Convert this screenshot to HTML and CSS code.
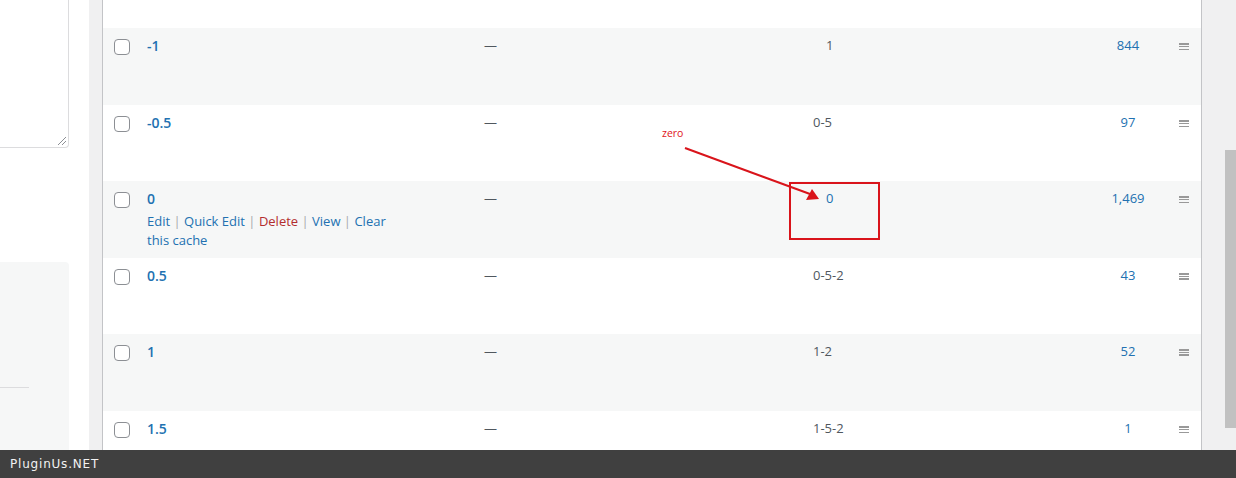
FILE: index.html
```html
<!DOCTYPE html>
<html lang="en">
<head>
  <meta charset="UTF-8">
  <title>Terms</title>
  <link rel="stylesheet" href="styles.css">
</head>
<body>

<div class="screen">
  <aside class="side">
    <div class="side-field"><span class="grip"></span></div>
    <div class="side-box"><div class="side-rule"></div></div>
  </aside>

  <main class="list">
    <table class="terms">
      <colgroup>
        <col class="col-cb">
        <col class="col-name">
        <col class="col-desc">
        <col class="col-slug">
        <col class="col-count">
        <col class="col-handle">
      </colgroup>
      <tbody>
        <tr class="cut"><td colspan="6"></td></tr>
        <tr class="alt">
          <td class="cb"><span class="check"></span></td>
          <td><a class="title" href="#">-1</a></td>
          <td class="muted">—</td>
          <td class="muted inset">1</td>
          <td class="count"><a href="#">844</a></td>
          <td class="handle"><span class="bars"></span></td>
        </tr>
        <tr>
          <td class="cb"><span class="check"></span></td>
          <td><a class="title" href="#">-0.5</a></td>
          <td class="muted">—</td>
          <td class="muted">0-5</td>
          <td class="count"><a href="#">97</a></td>
          <td class="handle"><span class="bars"></span></td>
        </tr>
        <tr class="alt">
          <td class="cb"><span class="check"></span></td>
          <td>
            <a class="title" href="#">0</a>
            <div class="row-actions">
              <a href="#">Edit</a> <span class="sep">|</span> <a href="#">Quick&nbsp;Edit</a> <span class="sep">|</span> <a class="del" href="#">Delete</a> <span class="sep">|</span> <a href="#">View</a> <span class="sep">|</span> <a href="#">Clear this cache</a>
            </div>
          </td>
          <td class="muted">—</td>
          <td class="muted inset blue">0</td>
          <td class="count"><a href="#">1,469</a></td>
          <td class="handle"><span class="bars"></span></td>
        </tr>
        <tr>
          <td class="cb"><span class="check"></span></td>
          <td><a class="title" href="#">0.5</a></td>
          <td class="muted">—</td>
          <td class="muted">0-5-2</td>
          <td class="count"><a href="#">43</a></td>
          <td class="handle"><span class="bars"></span></td>
        </tr>
        <tr class="alt">
          <td class="cb"><span class="check"></span></td>
          <td><a class="title" href="#">1</a></td>
          <td class="muted">—</td>
          <td class="muted">1-2</td>
          <td class="count"><a href="#">52</a></td>
          <td class="handle"><span class="bars"></span></td>
        </tr>
        <tr>
          <td class="cb"><span class="check"></span></td>
          <td><a class="title" href="#">1.5</a></td>
          <td class="muted">—</td>
          <td class="muted">1-5-2</td>
          <td class="count"><a href="#">1</a></td>
          <td class="handle"><span class="bars"></span></td>
        </tr>
      </tbody>
    </table>
  </main>

  <div class="track"><div class="thumb"></div></div>
</div>

<!-- annotation drawn on top of the screenshot -->
<svg class="note" width="1236" height="478" viewBox="0 0 1236 478">
  <text x="662" y="137" class="note-text">zero</text>
  <line x1="685" y1="148" x2="810" y2="194" stroke="#d9141b" stroke-width="2"/>
  <polygon points="819,199 812,189 806,200" fill="#d9141b"/>
  <rect x="790" y="183" width="89" height="56" fill="none" stroke="#d9141b" stroke-width="2"/>
</svg>

<footer class="brand">PluginUs.NET</footer>

</body>
</html>
```

FILE: styles.css
```css
body {
  margin: 0;
  background: #f0f0f1;
  font-family: "Open Sans", "Noto Sans", sans-serif;
  font-size: 13px;
  color: #3c434a;
  overflow: hidden;
}

a {
  color: #2271b1;
  text-decoration: none;
}

.screen {
  display: flex;
  height: 478px;
}

/* left column (form side) */
.side {
  width: 89px;
  background: #fff;
  display: flex;
  flex-direction: column;
}

.side-field {
  width: 68px;
  height: 147px;
  border-right: 1px solid #dcdcde;
  border-bottom: 1px solid #dcdcde;
  border-bottom-right-radius: 4px;
  position: relative;
}

.grip {
  position: absolute;
  right: 2px;
  bottom: 2px;
  width: 8px;
  height: 8px;
  background: linear-gradient(135deg, transparent 45%, #8c8f94 45%, #8c8f94 52%, transparent 52%, transparent 70%, #8c8f94 70%, #8c8f94 77%, transparent 77%);
}

.side-box {
  width: 69px;
  margin-top: 114px;
  flex: 1;
  background: #f6f7f7;
  border-top-right-radius: 4px;
}

.side-rule {
  width: 29px;
  height: 1px;
  margin-top: 125px;
  background: #dcdcde;
}

/* term list table */
.list {
  margin-left: 13px;
  width: 1098px;
  border-left: 1px solid #c3c4c7;
  border-right: 1px solid #c3c4c7;
  background: #fff;
}

.terms {
  width: 100%;
  border-collapse: collapse;
  table-layout: fixed;
}

.col-cb { width: 34px; }
.col-name { width: 337px; }
.col-desc { width: 329px; }
.col-slug { width: 284px; }
.col-count { width: 82px; }
.col-handle { width: 32px; }

.terms tr { height: 76px; }
.terms tr.alt { height: 77px; background: #f6f7f7; }
.terms tr.cut { height: 28px; }

.terms td {
  vertical-align: top;
  padding: 8px 10px 0;
  line-height: 19.5px;
  overflow: hidden;
}

.terms td.cb {
  padding: 11px 0 0 11px;
}

.check {
  display: block;
  width: 16px;
  height: 16px;
  box-sizing: border-box;
  border: 1px solid #8c8f94;
  border-radius: 4px;
  background: #fff;
}

.title {
  font-size: 14px;
  font-weight: 600;
  line-height: 19.6px;
}

.row-actions {
  padding-top: 2px;
  max-width: 252px;
  color: #a7aaad;
}

.row-actions .del { color: #b32d2e; }
.row-actions .sep { color: #a7aaad; }

.muted { color: #50575e; }
.muted.blue { color: #2271b1; }
.terms td.inset { padding-left: 23px; }

.count { text-align: center; }

.terms td.handle {
  padding: 15px 0 0 10px;
}

.bars {
  display: block;
  width: 10px;
  height: 7px;
  background: linear-gradient(#999 0 1.5px, transparent 1.5px 2.75px, #999 2.75px 4.25px, transparent 4.25px 5.5px, #999 5.5px 7px);
}

/* page scrollbar */
.track {
  flex: 1;
  display: flex;
  justify-content: flex-end;
}

.thumb {
  width: 11px;
  height: 278px;
  margin-top: 150px;
  background: #c1c1c1;
}

/* red annotation */
.note {
  position: absolute;
  top: 0;
  left: 0;
  pointer-events: none;
}

.note-text {
  font-family: "Open Sans", sans-serif;
  font-size: 10.5px;
  fill: #e0141b;
}

/* watermark strip */
.brand {
  position: fixed;
  left: 0;
  right: 0;
  bottom: 0;
  height: 28px;
  line-height: 28px;
  padding-left: 10px;
  background: #404040;
  color: #f2f2f2;
  font-family: "DejaVu Sans", sans-serif;
  font-size: 12px;
  letter-spacing: 0.8px;
}
```
